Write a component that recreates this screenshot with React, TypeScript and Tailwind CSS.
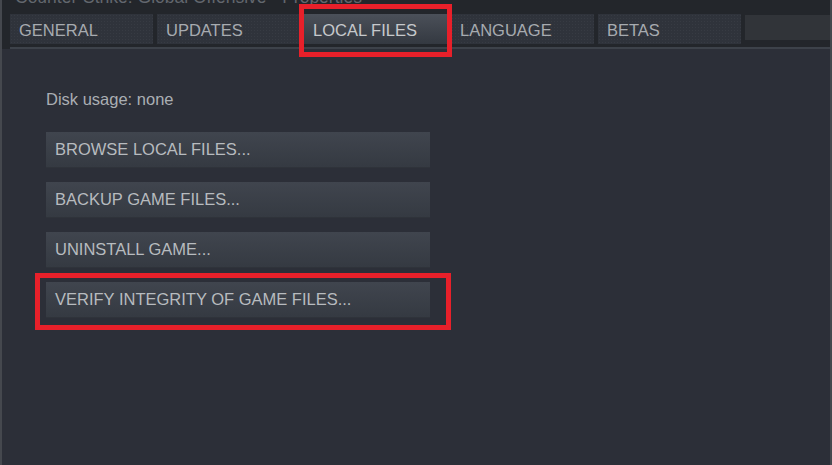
import React from "react";

const tabs = ["GENERAL", "UPDATES", "LOCAL FILES", "LANGUAGE", "BETAS"];
const buttons = [
  "BROWSE LOCAL FILES...",
  "BACKUP GAME FILES...",
  "UNINSTALL GAME...",
  "VERIFY INTEGRITY OF GAME FILES...",
];

export default function App() {
  return (
    <div
      className="relative w-[832px] h-[465px] flex flex-col bg-[#2c2f38] border-l-2 border-r-2 border-[#45484e] overflow-hidden"
      style={{ fontFamily: '"Liberation Sans", Arial, sans-serif' }}
    >
      <div className="bg-[#23262b] flex flex-col">
        <div className="h-[14px] overflow-hidden pl-[13px]">
          <div className="-mt-[12px] text-[17.5px] leading-[18px] text-[#62676e] whitespace-nowrap">
            Counter-Strike: Global Offensive - Properties
          </div>
        </div>
        <div className="h-[30px] flex gap-[4px] pl-[8px]">
          {tabs.map((t) => {
            const active = t === "LOCAL FILES";
            return (
              <div
                key={t}
                className={
                  active
                    ? "w-[143px] h-full flex items-center pt-[3px] pl-[9px] text-[16.5px] text-[#c6c9cc] bg-linear-to-b from-[#4b5059] to-[#343941]"
                    : "w-[143px] h-full flex items-center pt-[3px] pl-[9px] text-[16.5px] text-[#a7abb0] bg-[#2f333b] bg-[radial-gradient(#ffffff0a_1px,transparent_1px)] bg-[length:3px_3px]"
                }
              >
                {t}
              </div>
            );
          })}
          <div className="flex-1 mt-[1px] h-[25px] bg-[#26292e] bg-[radial-gradient(#ffffff0d_1px,transparent_1px)] bg-[length:2px_2px]" />
        </div>
        <div className="h-[3px]" />
        <div className="ml-[8px] h-[2px] bg-[#3d424a]" />
      </div>

      <div className="flex-1 flex flex-col pl-[44px] pt-[41px]">
        <div className="text-[16.5px] leading-[18px] text-[#aaaeb3]">Disk usage: none</div>
        <div className="mt-[24px] flex flex-col gap-[14px]">
          {buttons.map((b) => (
            <div
              key={b}
              className="w-[384px] h-[36px] flex items-center pl-[9px] text-[16.5px] text-[#b7bbbf] bg-linear-to-b from-[#40454e] to-[#353a42] border-b border-[#2f333a]"
            >
              {b}
            </div>
          ))}
        </div>
      </div>

      <div className="absolute left-[297px] top-[4px] w-[153px] h-[53px] border-[5px] border-[#e8202a]" />
      <div className="absolute left-[33px] top-[273px] w-[416px] h-[57px] border-[5px] border-[#e8202a]" />
    </div>
  );
}
